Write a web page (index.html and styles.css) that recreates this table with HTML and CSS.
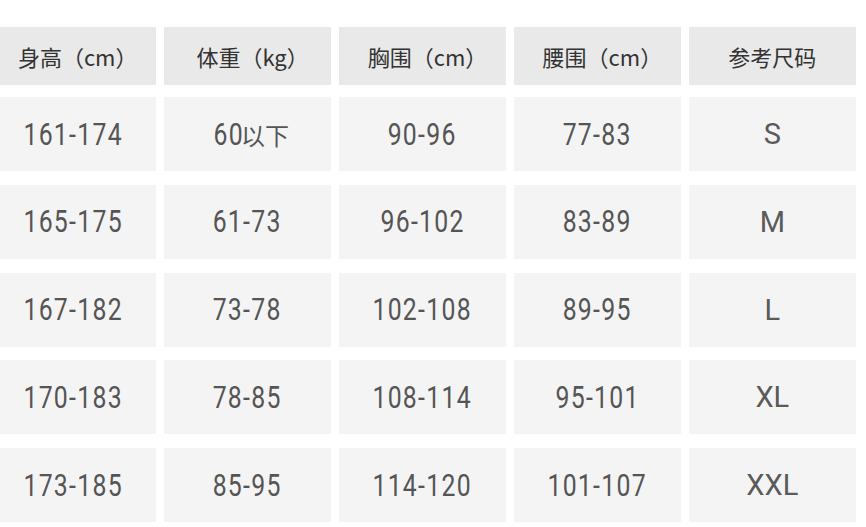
FILE: index.html
```html
<!DOCTYPE html>
<html lang="zh-CN">
<head>
<meta charset="utf-8">
<title>尺码表</title>
<link rel="stylesheet" href="styles.css">
</head>
<body>
<div class="size-table">
  <div class="row head">
    <div class="cell"><span class="label">身高（cm）</span></div>
    <div class="cell"><span class="label">体重（kg）</span></div>
    <div class="cell"><span class="label">胸围（cm）</span></div>
    <div class="cell"><span class="label">腰围（cm）</span></div>
    <div class="cell"><span class="label plain">参考尺码</span></div>
  </div>
  <div class="body">
    <div class="row">
      <div class="cell"><span class="num">161-174</span></div>
      <div class="cell"><span class="num short">60</span><span class="cjk">以下</span></div>
      <div class="cell"><span class="num">90-96</span></div>
      <div class="cell"><span class="num">77-83</span></div>
      <div class="cell size">S</div>
    </div>
    <div class="row">
      <div class="cell"><span class="num">165-175</span></div>
      <div class="cell"><span class="num">61-73</span></div>
      <div class="cell"><span class="num">96-102</span></div>
      <div class="cell"><span class="num">83-89</span></div>
      <div class="cell size">M</div>
    </div>
    <div class="row">
      <div class="cell"><span class="num">167-182</span></div>
      <div class="cell"><span class="num">73-78</span></div>
      <div class="cell"><span class="num">102-108</span></div>
      <div class="cell"><span class="num">89-95</span></div>
      <div class="cell size">L</div>
    </div>
    <div class="row">
      <div class="cell"><span class="num">170-183</span></div>
      <div class="cell"><span class="num">78-85</span></div>
      <div class="cell"><span class="num">108-114</span></div>
      <div class="cell"><span class="num">95-101</span></div>
      <div class="cell size">XL</div>
    </div>
    <div class="row">
      <div class="cell"><span class="num">173-185</span></div>
      <div class="cell"><span class="num">85-95</span></div>
      <div class="cell"><span class="num">114-120</span></div>
      <div class="cell"><span class="num">101-107</span></div>
      <div class="cell size">XXL</div>
    </div>
  </div>
</div>
</body>
</html>
```
FILE: styles.css
```css
html, body {
  margin: 0;
  padding: 0;
  background: #ffffff;
  overflow: hidden;
}

.size-table {
  width: 867px;
  margin: 27px 0 0 -11px;
  display: flex;
  flex-direction: column;
  gap: 12px;
}

.body {
  display: flex;
  flex-direction: column;
  gap: 13.75px;
}

.row {
  display: grid;
  grid-template-columns: repeat(5, 1fr);
  column-gap: 7.5px;
  height: 74px;
}

.cell {
  background: #f4f4f4;
  display: flex;
  align-items: center;
  justify-content: center;
  color: #555555;
  font-family: "Roboto", sans-serif;
  font-size: 31px;
}

.num {
  display: inline-block;
  font-family: "Roboto", sans-serif;
  font-size: 31px;
  letter-spacing: 1.6px;
  transform: scaleX(0.8);
  margin: 0 -6%;
}

.num.short {
  margin: 0 -3px 0 0;
  transform-origin: right center;
}

.cjk {
  font-family: "Noto Sans CJK SC", sans-serif;
  font-size: 24px;
  margin-left: 0;
}

.cell.size {
  font-family: "Roboto", sans-serif;
  font-size: 29px;
  color: #5a5a5a;
}

.head {
  height: 58px;
}

.head .cell {
  background: #e9e9e9;
  color: #333333;
}

.label {
  font-family: "Noto Sans CJK SC", sans-serif;
  font-size: 22px;
  margin-right: -10px;
}

.label.plain {
  margin-right: 0;
}
```
